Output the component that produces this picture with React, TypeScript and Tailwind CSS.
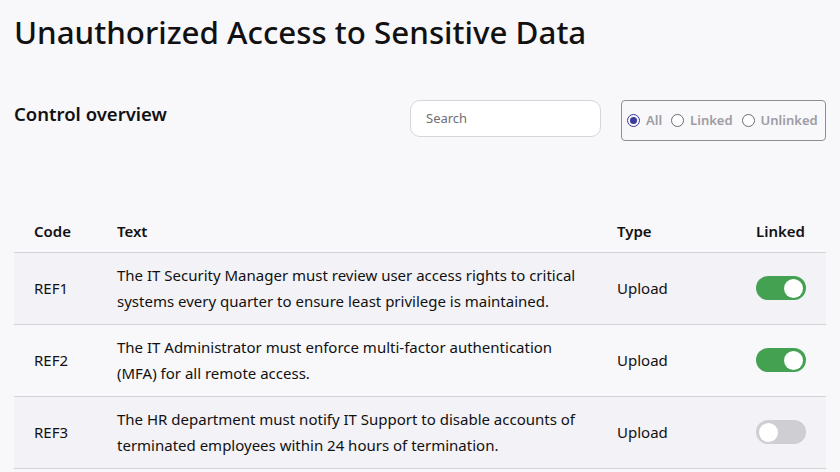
import React from "react";

type Row = { code: string; text: string[]; type: string; linked: boolean };

const rows: Row[] = [
  {
    code: "REF1",
    text: [
      "The IT Security Manager must review user access rights to critical",
      "systems every quarter to ensure least privilege is maintained.",
    ],
    type: "Upload",
    linked: true,
  },
  {
    code: "REF2",
    text: [
      "The IT Administrator must enforce multi-factor authentication",
      "(MFA) for all remote access.",
    ],
    type: "Upload",
    linked: true,
  },
  {
    code: "REF3",
    text: [
      "The HR department must notify IT Support to disable accounts of",
      "terminated employees within 24 hours of termination.",
    ],
    type: "Upload",
    linked: false,
  },
];

const Toggle = ({ on }: { on: boolean }) => (
  <div
    className={
      on
        ? "w-[50px] h-[24px] rounded-full bg-[#45a152] flex items-center justify-end px-[3px]"
        : "w-[50px] h-[24px] rounded-full bg-[#cfced3] flex items-center justify-start px-[3px]"
    }
  >
    <div className="w-[19px] h-[19px] rounded-full bg-white" />
  </div>
);

const Radio = ({ label, checked }: { label: string; checked?: boolean }) => (
  <label className="flex items-center gap-[6px]">
    <span
      className={
        checked
          ? "w-[13px] h-[13px] rounded-full border border-[#3b3b9c] flex items-center justify-center"
          : "w-[13px] h-[13px] rounded-full border border-[#6b6b70] bg-white"
      }
    >
      {checked && <span className="w-[7px] h-[7px] rounded-full bg-[#3b3b9c]" />}
    </span>
    <span className="text-[13px] font-semibold text-[#9d9ca3]">{label}</span>
  </label>
);

const App = () => {
  return (
    <div
      className="min-h-screen bg-[#f8f7fa] text-[#111] px-[14px] pt-[10px]"
      style={{ fontFamily: '"Noto Sans", "Open Sans", sans-serif' }}
    >
      <h1 className="text-[31.3px] leading-[44px] font-medium">
        Unauthorized Access to Sensitive Data
      </h1>

      <div className="flex items-start mt-[46px] w-[812px]">
        <h2 className="text-[18.5px] font-semibold flex-1">Control overview</h2>
        <div className="w-[191px] h-[37px] rounded-[10px] border border-[#d6d5da] bg-white flex items-center px-[15px] mr-[20px]">
          <span className="text-[13px] text-[#6f6e75]">Search</span>
        </div>
        <div className="w-[205px] h-[41px] rounded-[4px] border border-[#8f8e94] flex items-center gap-[9px] px-[5px]">
          <Radio label="All" checked />
          <Radio label="Linked" />
          <Radio label="Unlinked" />
        </div>
      </div>

      <table className="w-[812px] mt-[69px] border-collapse text-[15px]">
        <thead>
          <tr className="border-b border-[#d3d2d6]">
            <th className="text-left font-semibold pl-[20px] w-[103px] h-[42px]">Code</th>
            <th className="text-left font-semibold">Text</th>
            <th className="text-left font-semibold w-[129px]">Type</th>
            <th className="text-right font-semibold pr-[21px] w-[80px]">Linked</th>
          </tr>
        </thead>
        <tbody>
          {rows.map((r, i) => (
            <tr
              key={r.code}
              className={
                i % 2 === 0
                  ? "border-b border-[#d3d2d6] bg-[#f3f2f6]"
                  : "border-b border-[#d3d2d6] bg-[#f8f7fa]"
              }
            >
              <td className="pl-[20px] h-[72px]">{r.code}</td>
              <td className="leading-[26px] py-[9px]">
                {r.text.map((t) => (
                  <div key={t}>{t}</div>
                ))}
              </td>
              <td>{r.type}</td>
              <td className="pr-[20px]">
                <div className="flex justify-end">
                  <Toggle on={r.linked} />
                </div>
              </td>
            </tr>
          ))}
        </tbody>
      </table>
    </div>
  );
};

export default App;
